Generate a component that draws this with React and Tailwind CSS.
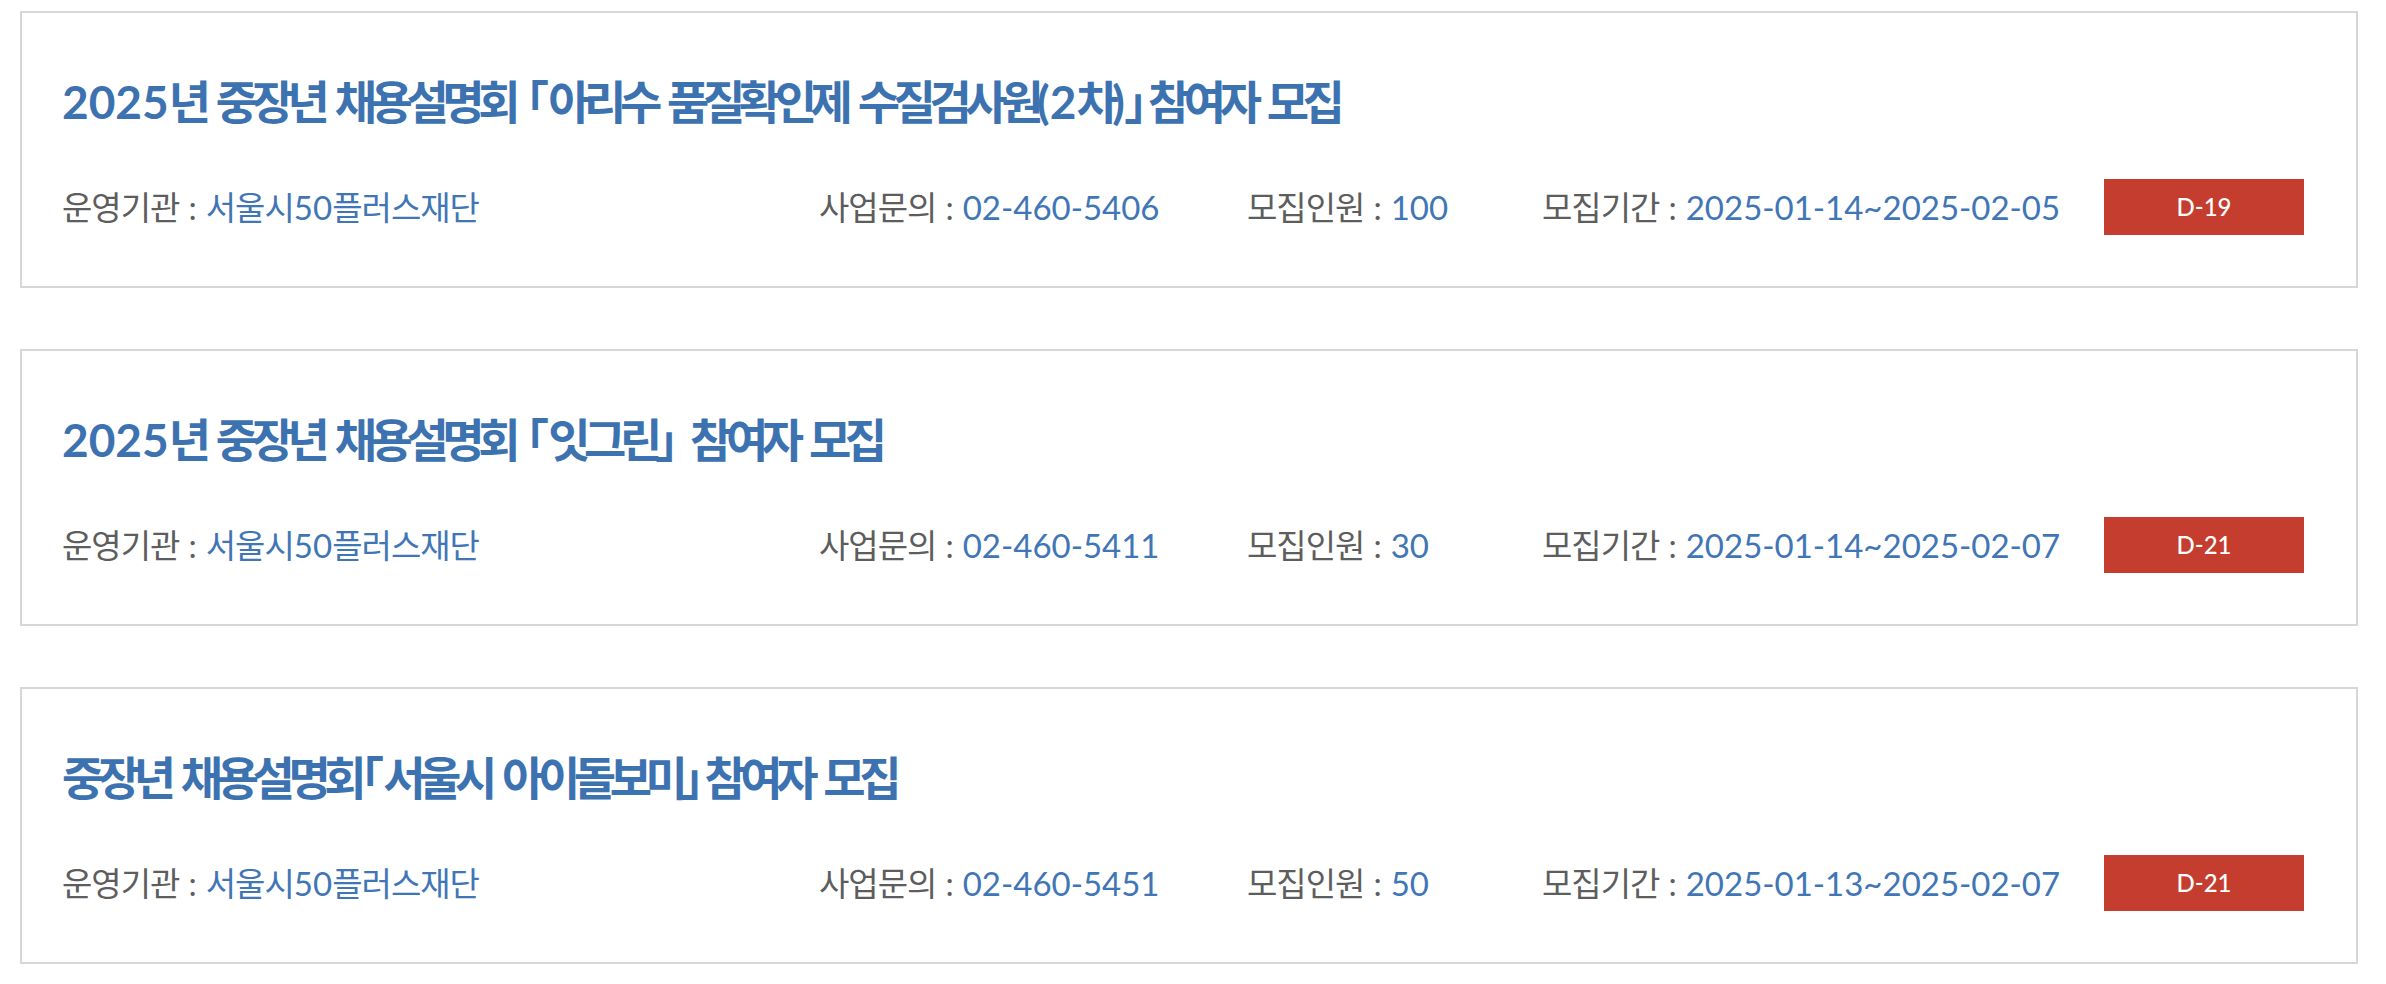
import React from "react"

const posts = [
    {
        title: "2025년 중장년 채용설명회 「아리수 품질확인제 수질검사원(2차)」참여자 모집",
        org: "서울시50플러스재단",
        tel: "02-460-5406",
        count: "100",
        period: "2025-01-14~2025-02-05",
        dday: "D-19",
    },
    {
        title: "2025년 중장년 채용설명회 「잇그린」 참여자 모집",
        org: "서울시50플러스재단",
        tel: "02-460-5411",
        count: "30",
        period: "2025-01-14~2025-02-07",
        dday: "D-21",
    },
    {
        title: "중장년 채용설명회「서울시 아이돌보미」참여자 모집",
        org: "서울시50플러스재단",
        tel: "02-460-5451",
        count: "50",
        period: "2025-01-13~2025-02-07",
        dday: "D-21",
    },
]

// hangul in the reference is set narrower than Noto's glyphs,
// and the corner brackets are proportional, flush to the word
const Ko = ({ text, tight }) => {
    const runs = text.match(/[\uac00-\ud7a3]+|[「」]|[^\uac00-\ud7a3「」]+/g) || []
    return runs.map((run, i) => {
        if (run === "「" || run === "」") {
            return (
                <span
                    key={i}
                    className="font-['Noto_Sans_CJK_JP',sans-serif] leading-[0] [font-feature-settings:'palt']"
                >
                    {run}
                </span>
            )
        }
        if (/[\uac00-\ud7a3]/.test(run)) {
            return (
                <span key={i} className={tight}>
                    {run}
                </span>
            )
        }
        return <span key={i}>{run}</span>
    })
}

const Info = ({ label, value, width }) => {
    return (
        <div className={`${width} flex items-center whitespace-nowrap`}>
            <span className="text-[#5d5d5d]">
                <Ko text={label} tight="tracking-[-0.03em]" />
            </span>
            <span className="mx-[9px] text-[#5d5d5d]">:</span>
            <span className="text-[#4176b6]">
                <Ko text={value} tight="tracking-[-0.03em]" />
            </span>
        </div>
    )
}

const PostCard = ({ post }) => {
    return (
        <div className="border-2 border-[#d7d7d7] bg-white pl-[40px] pr-[52px] pt-[61px] pb-[51px]">
            <h2 className="h-[56px] text-[46px] font-bold leading-[56px] text-[#3d72b1] whitespace-nowrap">
                <Ko text={post.title} tight="tracking-[-0.14em]" />
            </h2>
            <div className="mt-[49px] flex h-[56px] items-center text-[33px] leading-[40px]">
                <Info label="운영기관" value={post.org} width="w-[757px]" />
                <Info label="사업문의" value={post.tel} width="w-[428px]" />
                <Info label="모집인원" value={post.count} width="w-[295px]" />
                <Info label="모집기간" value={post.period} width="w-[562px]" />
                <div className="flex h-[56px] w-[200px] items-center justify-center bg-[#c53d2e] text-[24px] font-medium text-white">
                    {post.dday}
                </div>
            </div>
        </div>
    )
}

export default function App() {
    return (
        <div className="min-h-screen bg-white pt-[11px] pl-[20px] pr-[28px] font-[Lato,'Noto_Sans_CJK_KR',sans-serif]">
            <div className="flex flex-col gap-[61px]">
                {posts.map((post, index) => (
                    <PostCard key={index} post={post} />
                ))}
            </div>
        </div>
    )
}
